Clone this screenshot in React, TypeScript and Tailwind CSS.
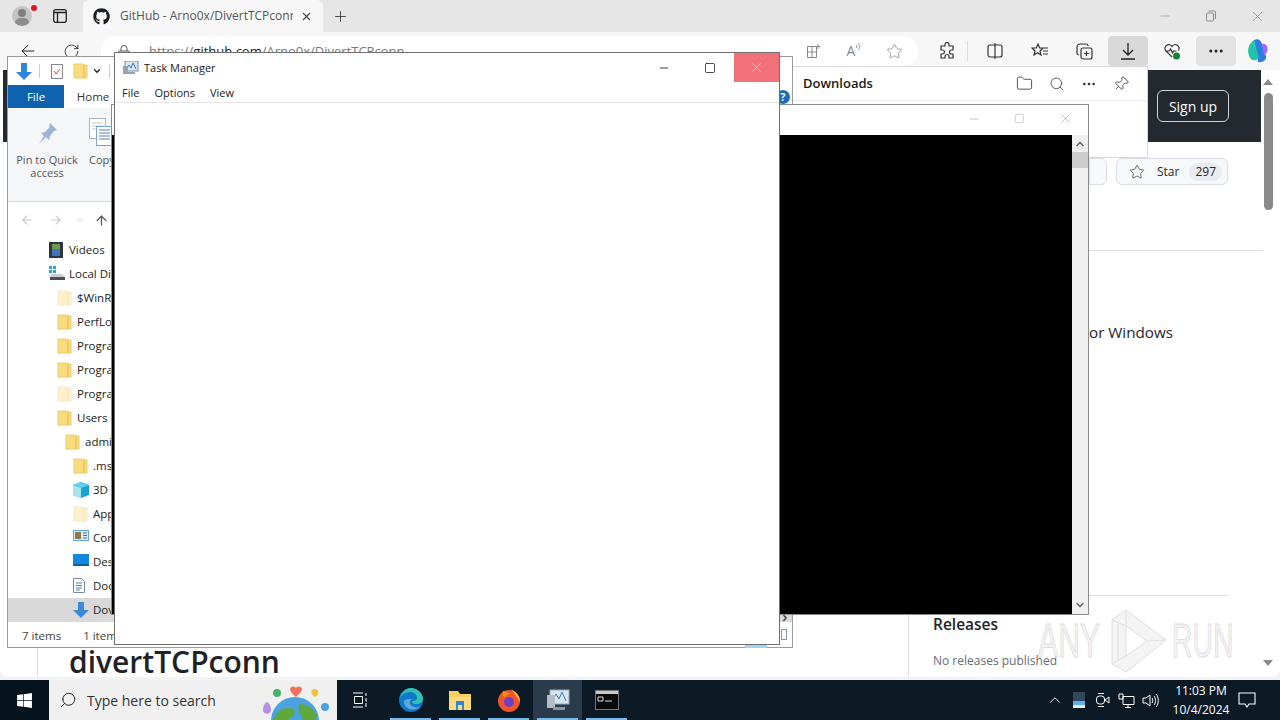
import {
  ArrowLeft,
  ArrowRight,
  ArrowUp,
  ChevronDown,
  ChevronRight,
  ChevronUp,
  Ellipsis,
  Folder,
  Minus,
  Pin,
  Plus,
  RotateCw,
  Search,
  Square,
  Star,
  X,
} from "lucide-react";
import { FaGithub, FaWindows } from "react-icons/fa";

const font = "font-['Open_Sans','Noto_Sans',sans-serif]";

const FolderIcon = ({ faded }: { faded?: boolean }) => (
  <svg width="15" height="16" viewBox="0 0 15 16" className={faded ? "opacity-40" : ""}>
    <path d="M1 1h9l1 1h3v13H1z" fill="#fbdc7c" stroke="#eccb6d" />
    <path d="M11 2v13" stroke="#e3b94f" />
  </svg>
);

const treeRows = [
  { label: "Videos", x: 69, icon: "video" },
  { label: "Local Di", x: 69, icon: "disk" },
  { label: "$WinR", x: 77, icon: "faded" },
  { label: "PerfLo", x: 77, icon: "folder" },
  { label: "Progra", x: 77, icon: "folder" },
  { label: "Progra", x: 77, icon: "folder" },
  { label: "Progra", x: 77, icon: "faded" },
  { label: "Users", x: 77, icon: "folder" },
  { label: "admi", x: 85, icon: "folder" },
  { label: ".ms", x: 93, icon: "folder" },
  { label: "3D (", x: 93, icon: "cube" },
  { label: "App", x: 93, icon: "faded" },
  { label: "Con", x: 93, icon: "contact" },
  { label: "Des", x: 93, icon: "desktop" },
  { label: "Doc", x: 93, icon: "doc" },
  { label: "Dov", x: 93, icon: "down" },
];

const TreeIcon = ({ kind }: { kind: string }) => {
  if (kind === "folder") return <FolderIcon />;
  if (kind === "faded") return <FolderIcon faded />;
  if (kind === "video")
    return (
      <svg width="14" height="16" viewBox="0 0 14 16">
        <rect width="14" height="16" fill="#2c3440" />
        <rect x="3" y="2" width="8" height="12" fill="#6f9a52" />
        <rect x="3" y="7" width="8" height="7" fill="#3f74b5" />
      </svg>
    );
  if (kind === "disk")
    return (
      <svg width="16" height="14" viewBox="0 0 16 14">
        <rect x="0" y="0" width="3" height="3" fill="#22a7d8" />
        <rect x="4" y="0" width="3" height="3" fill="#22a7d8" />
        <rect x="0" y="4" width="3" height="3" fill="#22a7d8" />
        <rect x="4" y="4" width="3" height="3" fill="#22a7d8" />
        <path d="M2 8h11l3 3H1z" fill="#c9ced2" />
        <rect x="1" y="11" width="15" height="3" fill="#4a4f55" />
      </svg>
    );
  if (kind === "cube")
    return (
      <svg width="16" height="16" viewBox="0 0 16 16">
        <path d="M8 0l8 3v10l-8 3-8-3V3z" fill="#19a3cf" />
        <path d="M0 3l8 3 8-3-8-3z" fill="#5fd0ea" />
        <path d="M0 3l8 3v10l-8-3z" fill="#a8e3f2" />
      </svg>
    );
  if (kind === "contact")
    return (
      <svg width="16" height="11" viewBox="0 0 16 11">
        <rect x=".5" y=".5" width="15" height="10" fill="#dcebf7" stroke="#6aa5d6" />
        <rect x="2" y="2" width="6" height="7" fill="#8a7b4f" />
        <path d="M10 3h4M10 5.500h4M10 8h4" stroke="#3f74b5" />
      </svg>
    );
  if (kind === "desktop")
    return (
      <svg width="16" height="12" viewBox="0 0 16 12">
        <rect width="16" height="12" fill="#1287e0" />
        <rect y="10" width="16" height="2" fill="#0b5fa5" />
      </svg>
    );
  if (kind === "doc")
    return (
      <svg width="12" height="15" viewBox="0 0 12 15">
        <path d="M.5.5h8l3 3v11H.5z" fill="#fff" stroke="#7a8a99" />
        <path d="M3 5h6M3 7.500h6M3 10h6M3 12h4" stroke="#3f8ac9" />
      </svg>
    );
  return (
    <svg width="16" height="16" viewBox="0 0 16 16">
      <path d="M5 0h6v8h5l-8 8-8-8h5z" fill="#3a8ad9" />
    </svg>
  );
};

const ToolbarGlyph = ({ children, className = "" }: { children: React.ReactNode; className?: string }) => (
  <div className={`flex h-[30px] w-[40px] items-center justify-center rounded-sm text-[#3a3a3a] ${className}`}>
    {children}
  </div>
);

const BrowserChrome = () => (
  <>
    <div className="flex h-[32px] items-end bg-[#e6e6e6] pl-[8px]">
      <div className="flex h-[32px] w-[75px] items-center gap-[21px] pl-[4px]">
        <div className="relative h-[20px] w-[20px] overflow-hidden rounded-full bg-[#c4c4c4]">
          <div className="absolute left-[6px] top-[3px] h-[8px] w-[8px] rounded-full bg-[#7f7f7f]" />
          <div className="absolute left-[3px] top-[12px] h-[10px] w-[14px] rounded-full bg-[#8c8c8c]" />
        </div>
        <svg width="14" height="14" viewBox="0 0 14 14" fill="none" stroke="#222" strokeWidth="1.3">
          <rect x=".7" y=".7" width="12.600" height="12.600" rx="2" />
          <path d="M1 3.500h12M4.500 3.500V13" />
        </svg>
      </div>
      <div className="flex h-[32px] w-[240px] items-center rounded-t-md bg-[#f7f7f7] pl-[10px] pr-[10px]">
        <FaGithub className="shrink-0 text-[17px] text-[#1b1f23]" />
        <span className={`ml-[10px] w-[173px] truncate whitespace-nowrap text-[12px] [text-overflow:clip] text-[#555] ${font}`}>
          GitHub - Arno0x/DivertTCPconn
        </span>
        <X size={13} className="ml-auto text-[#444]" />
      </div>
      <div className="flex h-[32px] w-[35px] items-center justify-center">
        <Plus size={17} strokeWidth={1.2} className="text-[#333]" />
      </div>
      <div className="ml-auto flex h-[32px] items-center pr-[14px] text-[#8c8c8c]">
        <Minus size={14} strokeWidth={1} />
        <svg width="12" height="12" viewBox="0 0 12 12" fill="none" stroke="#8c8c8c" className="ml-[33px]">
          <rect x="1.500" y="3" width="7" height="8" rx="1" />
          <path d="M3.500 1h6a1 1 0 0 1 1 1v7" />
        </svg>
        <X size={17} strokeWidth={1} className="ml-[32px]" />
      </div>
    </div>
    <div className="flex h-[38px] items-center bg-[#f7f7f7] pl-[8px]">
      <ArrowLeft size={20} strokeWidth={1.2} className="ml-[10px] text-[#222]" />
      <RotateCw size={17} strokeWidth={1.2} className="ml-[25px] text-[#222]" />
      <div className="ml-[21px] flex h-[30px] w-[817px] items-center rounded-full bg-white pl-[16px] pt-[2px]">
        <svg width="14" height="16" viewBox="0 0 14 16" fill="none" stroke="#555" className="mr-[18px]">
          <rect x="1.500" y="7" width="11" height="8" rx="1" />
          <path d="M4 7V4.500a3 3 0 0 1 6 0V7" />
        </svg>
        <span className={`text-[13px] text-[#777] ${font}`}>
          https://<span className="text-[#222]">github.com</span>/Arno0x/DivertTCPconn
        </span>
      </div>
    </div>
  </>
);

const ToolbarIcons = () => (
  <div className="absolute left-[794px] top-[36px] flex h-[30px] items-center">
    <div className="flex w-[120px] items-center justify-between pl-[12px] pr-[11px] text-[#8a8a8a]">
      <svg width="16" height="16" viewBox="0 0 16 16" fill="none" stroke="#8a8a8a">
        <path d="M1.500 3.500h9v11h-9zM1.500 9h9M6 3.500v11M12 1v5M9.500 3.500h5" />
      </svg>
      <div className="flex items-start">
        <span className={`text-[14px] leading-[18px] ${font}`}>A</span>
        <svg width="6" height="9" viewBox="0 0 6 9" fill="none" stroke="#8a8a8a">
          <path d="M1 3c1 1 1 2 0 3M3 1c2 2 2 5 0 7" />
        </svg>
      </div>
      <Star size={17} strokeWidth={1.1} />
    </div>
    <div className="flex items-center pl-[13px]">
      <ToolbarGlyph>
        <svg width="18" height="18" viewBox="0 0 18 18" fill="none" stroke="#333" strokeWidth="1.2">
          <path d="M7 2.500a2 2 0 0 1 4 0V4h4v4h-1.500a2 2 0 0 0 0 4H15v4h-4v-1.500a2 2 0 0 0-4 0V16H3v-4h1.500a2 2 0 0 0 0-4H3V4h4z" />
        </svg>
      </ToolbarGlyph>
      <div className="h-[20px] w-px bg-[#dcdcdc]" />
      <ToolbarGlyph className="ml-[7px]">
        <svg width="18" height="18" viewBox="0 0 18 18" fill="none" stroke="#333" strokeWidth="1.2">
          <rect x="2" y="3" width="14" height="12" rx="2" />
          <path d="M9 1v16" />
        </svg>
      </ToolbarGlyph>
      <ToolbarGlyph className="ml-[5px]">
        <svg width="18" height="18" viewBox="0 0 18 18" fill="none" stroke="#333" strokeWidth="1.2">
          <path d="M7 2l1.700 4H12L9 9l1 4-3.500-2.300L3 13l1-4-3-3h4.300zM12 6h5M12 9h5M12 12h5" />
        </svg>
      </ToolbarGlyph>
      <ToolbarGlyph className="ml-[4px]">
        <svg width="18" height="18" viewBox="0 0 18 18" fill="none" stroke="#333" strokeWidth="1.2">
          <rect x="6" y="6" width="11" height="11" rx="2" />
          <path d="M11.500 9v5M9 11.500h5M4 13a2 2 0 0 1-2-2V5a3 3 0 0 1 3-3h6a2 2 0 0 1 2 2" />
        </svg>
      </ToolbarGlyph>
      <ToolbarGlyph className="ml-[4px] bg-[#d9d9d9]">
        <svg width="18" height="20" viewBox="0 0 18 20" fill="none" stroke="#222" strokeWidth="1.3">
          <path d="M9 2v12M4 9l5 5 5-5M2 18h14" />
        </svg>
      </ToolbarGlyph>
      <ToolbarGlyph className="ml-[4px]">
        <svg width="20" height="20" viewBox="0 0 20 20" fill="none" stroke="#333" strokeWidth="1.2">
          <path d="M10 16L3.500 9.500a3.800 3.800 0 0 1 6.500-4 3.800 3.800 0 0 1 6.500 4M3 10h4l1.500-2 2 4 1-2h3" />
          <circle cx="14.500" cy="15" r="3.500" fill="#188038" stroke="none" />
        </svg>
      </ToolbarGlyph>
      <ToolbarGlyph className="ml-[4px] bg-[#e3e3e3]">
        <Ellipsis size={18} className="text-[#222]" />
      </ToolbarGlyph>
      <svg width="24" height="26" viewBox="0 0 24 26" className="ml-[10px]">
        <path d="M8 2c4-2 7 0 8 4l4 12c1 4-4 7-8 6z" fill="#2c7fe0" />
        <path d="M4 20C0 12 3 6 8 2l5 18c-3 3-7 3-9 0z" fill="#22c3a6" />
        <path d="M16 6c4-1 7 3 5 8l-3 4z" fill="#9a6bf0" />
      </svg>
    </div>
  </div>
);

const PageBody = () => (
  <div className="relative h-[607px] rounded-b-lg bg-white">
    <div className="absolute left-[3px] top-0 h-[72px] w-[1258px] bg-[#24292f]">
      <div className={`absolute left-[1154px] top-[20px] flex h-[32px] w-[72px] items-center justify-center rounded-md border border-[#d0d7de] text-[14px] text-white ${font}`}>
        Sign up
      </div>
    </div>
    <div className="absolute left-[37px] top-[570px] h-[37px] w-px bg-[#d8dee4]" />
    <h1 className={`absolute left-[69px] top-[572px] text-[30px] font-semibold leading-[40px] text-[#1f2328] ${font}`}>
      divertTCPconn
    </h1>
    <div className="absolute left-[1089px] top-[88px] h-[27px] w-[18px] rounded-r-md border border-[#d8dee4] bg-[#f6f8fa]" />
    <div className={`absolute left-[1116px] top-[88px] flex h-[27px] w-[112px] items-center rounded-md border border-[#d8dee4] bg-[#f6f8fa] pl-[12px] text-[12px] text-[#24292f] ${font}`}>
      <Star size={16} strokeWidth={1.4} className="text-[#57606a]" />
      <span className="ml-[12px]">Star</span>
      <span className="ml-[10px] rounded-full bg-[#e8ebef] px-[6px]">297</span>
    </div>
    <div className="absolute left-[1089px] top-[180px] h-px w-[174px] bg-[#d8dee4]" />
    <div className={`absolute left-[1089px] top-[250px] text-[15.200px] leading-[24px] text-[#1f2328] ${font}`}>or Windows</div>
    <div className="absolute left-[1085px] top-[525px] h-px w-[143px] bg-[#d8dee4]" />
    <div className="absolute left-[908px] top-[545px] h-[62px] w-px bg-[#d8dee4]" />
    <div className={`absolute left-[933px] top-[542px] text-[15.500px] font-semibold leading-[24px] text-[#1f2328] ${font}`}>Releases</div>
    <div className={`absolute left-[933px] top-[582px] text-[12px] leading-[18px] text-[#656d76] ${font}`}>No releases published</div>
    <div className="absolute left-[1258px] top-0 flex h-[600px] w-[20px] flex-col items-center pt-[9px]">
      <div className="h-0 w-0 border-x-[5px] border-b-[6px] border-x-transparent border-b-[#8a8a8a]" />
      <div className="mt-[8px] h-[117px] w-[9px] rounded-full bg-[#8a8a8a]" />
      <div className="mb-[4px] mt-auto h-0 w-0 border-x-[5px] border-t-[6px] border-x-transparent border-t-[#8a8a8a]" />
    </div>
  </div>
);

const DownloadsFlyout = () => (
  <div className="absolute left-[760px] top-[66px] h-[92px] w-[388px] border border-[#d8d8d8] bg-white">
    <div className="flex h-[34px] items-center border-b border-[#ececec] pl-[42px] pr-[18px]">
      <span className={`text-[13px] font-semibold text-[#1a1a1a] ${font}`}>Downloads</span>
      <Folder size={17} strokeWidth={1.2} className="ml-auto text-[#333]" />
      <Search size={16} strokeWidth={1.2} className="ml-[16px] text-[#333]" />
      <Ellipsis size={16} className="ml-[16px] text-[#333]" />
      <Pin size={16} strokeWidth={1.2} className="ml-[16px] rotate-45 text-[#333]" />
    </div>
  </div>
);

const ConsoleWindow = () => (
  <div className="absolute left-[111px] top-[104px] flex h-[511px] w-[978px] flex-col border border-[#8b8b8b] bg-white">
    <div className="flex h-[30px] items-center justify-end pb-[3px] pr-[15px] text-[#9a9a9a]">
      <Minus size={14} strokeWidth={1} />
      <Square size={11} strokeWidth={1} className="ml-[33px]" />
      <X size={15} strokeWidth={1} className="ml-[33px]" />
    </div>
    <div className="flex min-h-0 flex-1">
      <div className="flex-1 bg-black" />
      <div className="flex w-[16px] flex-col items-center bg-[#f0f0f0]">
        <ChevronUp size={12} strokeWidth={2.5} className="mt-[3px] text-[#555]" />
        <div className="mt-[2px] h-[16px] w-full bg-[#cdcdcd]" />
        <ChevronDown size={12} strokeWidth={2.500} className="mb-[3px] mt-auto text-[#555]" />
      </div>
    </div>
  </div>
);

const ExplorerWindow = () => (
  <div className={`absolute left-[7px] top-[56px] flex h-[592px] w-[786px] flex-col border border-[#9a9a9a] bg-white ${font}`}>
    <div className="flex h-[28px] items-center pl-[8px]">
      <svg width="16" height="17" viewBox="0 0 16 17">
        <path d="M5 0h6v9h5l-8 8-8-8h5z" fill="#2f86dc" />
      </svg>
      <div className="ml-[7px] h-[14px] w-px bg-[#ccc]" />
      <svg width="12" height="15" viewBox="0 0 12 15" className="ml-[11px]">
        <rect x=".5" y=".5" width="11" height="14" fill="#fff" stroke="#8a8a8a" />
        <path d="M3 7l2 3 4-5" stroke="#d1473a" fill="none" />
      </svg>
      <div className="ml-[10px]">
        <FolderIcon />
      </div>
      <ChevronDown size={10} strokeWidth={3} className="ml-[4px] text-[#222]" />
      <div className="ml-[7px] h-[14px] w-px bg-[#ccc]" />
    </div>
    <div className="flex h-[23px] text-[11.500px]">
      <div className="flex w-[56px] items-center justify-center bg-[#0f62ae] text-white">File</div>
      <div className="flex w-[58px] items-center justify-center text-[#333]">Home</div>
    </div>
    <div className="flex h-[94px] shrink-0 border-b border-[#d9d9d9] bg-[#f5f6f7] pl-[8px] pt-[14px]">
      <div className="flex w-[62px] flex-col items-center text-center text-[11px] leading-[13px] text-[#555]">
        <svg width="22" height="24" viewBox="0 0 22 24" className="mb-[7px]">
          <path d="M14 1l7 7-3 1-4 5-1 4-3-3-7 7 5-8-3-3 4-1 4-4z" fill="#9db4d3" />
        </svg>
        Pin to Quick
        <br />
        access
      </div>
      <div className="ml-[11px] flex flex-col text-[11px] leading-[13px] text-[#555]">
        <svg width="24" height="28" viewBox="0 0 24 28" className="-mt-[4px] mb-[7px]">
          <rect x=".5" y=".5" width="16" height="20" fill="#fff" stroke="#a7b3c2" />
          <path d="M3 5h11M3 8h11M3 11h11" stroke="#c3cad3" />
          <rect x="7.500" y="8.500" width="16" height="19" fill="#fff" stroke="#7fa3cf" />
          <path d="M10 12h11M10 15h11M10 18h11M10 21h11" stroke="#4f81bd" />
        </svg>
        Copy
      </div>
    </div>
    <div className="flex h-[36px] shrink-0 items-center pl-[12px] text-[#c8c8c8]">
      <ArrowLeft size={14} />
      <ArrowRight size={14} className="ml-[15px]" />
      <ChevronDown size={10} className="ml-[12px]" />
      <ArrowUp size={15} strokeWidth={2} className="ml-[9px] text-[#555]" />
    </div>
    <div className="flex min-h-0 flex-1 flex-col text-[11.500px] text-[#222]">
      {treeRows.map((row, i) => (
        <div
          key={i}
          className={`relative h-[24px] shrink-0 ${row.label === "Dov" ? "bg-[#d9d9d9]" : ""}`}
        >
          <div className="absolute top-[4px]" style={{ left: row.x - 28 }}>
            <TreeIcon kind={row.icon} />
          </div>
          <span className="absolute top-[3px] whitespace-nowrap" style={{ left: row.x - 8 }}>
            {row.label}
          </span>
        </div>
      ))}
    </div>
    <div className="flex h-[25px] shrink-0 items-center gap-[22px] pl-[14px] pt-[3px] text-[11.500px] text-[#444]">
      <span>7 items</span>
      <span>1 item</span>
    </div>
    <div className="absolute left-[768px] top-[33px] flex h-[14px] w-[14px] items-center justify-center rounded-full bg-[#1a6fb8] text-[10px] font-bold text-white">
      ?
    </div>
    <ChevronRight size={10} strokeWidth={3} className="absolute left-[772px] top-[556px] text-[#333]" />
    <div className="absolute left-[773px] top-[572px] h-[11px] w-[6px] border border-[#8a9bb0]" />
    <div className="absolute left-[737px] top-[588px] h-[3px] w-[22px] bg-[#9ed3f2]" />
  </div>
);

const TaskManagerWindow = () => (
  <div className={`absolute left-[114px] top-[52px] flex h-[593px] w-[666px] flex-col border border-[#707070] bg-white ${font}`}>
    <div className="flex h-[29px] items-center">
      <svg width="16" height="14" viewBox="0 0 16 14" className="ml-[8px]">
        <rect x="2" y="0" width="13" height="10" fill="#d7e6f2" stroke="#7c8b99" />
        <path d="M3 8l3-4 2 3 2-5 3 6" stroke="#3d7ab8" fill="none" />
        <rect x="0" y="5" width="5" height="8" fill="#9aa3ab" />
        <rect x="5" y="11" width="7" height="2" fill="#9aa3ab" />
      </svg>
      <span className="ml-[5px] pt-[1px] text-[11px] text-[#222]">Task Manager</span>
      <div className="ml-auto flex items-center">
        <Minus size={12} strokeWidth={1.6} className="mr-[34px] text-black" />
        <Square size={12} strokeWidth={1.4} className="mr-[18px] text-black" />
        <div className="flex h-[29px] w-[45px] items-center justify-center bg-[#f1707a]">
          <X size={15} strokeWidth={1} className="text-white" />
        </div>
      </div>
    </div>
    <div className="flex h-[21px] items-center gap-[15px] border-b border-[#e6e6e6] pl-[7px] pt-[2px] text-[11px] text-[#222]">
      <span>File</span>
      <span>Options</span>
      <span>View</span>
    </div>
    <div className="flex-1 bg-white" />
  </div>
);

const TaskbarSlot = ({
  children,
  selected,
}: {
  children: React.ReactNode;
  selected?: boolean;
}) => (
  <div className={`relative flex h-[40px] w-[49px] items-center justify-center ${selected ? "bg-[#2a3c4b]" : ""}`}>
    {children}
    <div className="absolute bottom-0 left-[4px] right-[4px] h-[2px] bg-[#76b9ed]" />
  </div>
);

const Taskbar = () => (
  <div className="flex h-[40px] items-center bg-[#0c1a25]">
    <div className="flex h-[40px] w-[49px] items-center justify-center bg-[#04131d]">
      <FaWindows className="text-[17px] text-white" />
    </div>
    <div className={`flex h-[40px] w-[288px] items-center bg-[#f0f0f0] pl-[10px] ${font}`}>
      <Search size={18} strokeWidth={1.3} className="-scale-x-100 text-[#222]" />
      <span className="ml-[10px] text-[14px] text-[#333]">Type here to search</span>
      <svg width="76" height="40" viewBox="0 0 76 40" className="ml-auto">
        <circle cx="34" cy="41" r="24" fill="#4aa3df" />
        <path d="M13 38c5-9 12-12 19-9 4 3 1 7-3 9-1 2-2 2-3 2H13z" fill="#5fa83a" />
        <path d="M38 24c7 0 14 4 18 11l-2 5H42c-2-6-6-10-4-16z" fill="#5fa83a" />
        <path d="M2 30c0-5 3-8 4-8s4 3 4 8-8 5-8 0z" fill="#b68fe0" />
        <circle cx="16" cy="13" r="4" fill="#48b26b" />
        <path d="M29 9c1-3 4-3 6-1 2-2 5-2 6 1 0 3-4 6-6 8-2-2-6-5-6-8z" fill="#f0705a" />
        <path d="M51 10c2-2 5-1 6 1 1 3-1 5-3 6-2-1-5-5-3-7z" fill="#f3bd3e" />
        <circle cx="64" cy="27" r="4" fill="#4aa3df" />
      </svg>
    </div>
    <div className="flex h-[40px] items-center">
      <div className="flex h-[40px] w-[49px] items-center justify-center pr-[3px]">
        <svg width="16" height="16" viewBox="0 0 16 16" fill="none" stroke="#fff">
          <path d="M1 1h10M2.500 4.500h8v7h-8zM1 15h10M14 1v3M14 6v3h1M14 11v4" />
        </svg>
      </div>
      <TaskbarSlot>
        <svg width="26" height="26" viewBox="0 0 26 26">
          <circle cx="13" cy="13" r="12" fill="#0f78c9" />
          <path d="M2 12C3 5 8 1 13 1c6 0 12 5 12 11 0 3-3 5-7 5-3 0-4-1-4-3 2 0 5 0 5-3 0-4-4-6-7-6-5 0-9 3-10 7z" fill="#35c1b1" />
          <path d="M6 15c0 5 6 9 12 7 2 0 3-1 4-2-4 1-8 0-10-3-1-2 0-4 2-5-4 0-8 0-8 3z" fill="#fff" opacity=".35" />
        </svg>
      </TaskbarSlot>
      <TaskbarSlot>
        <svg width="24" height="21" viewBox="0 0 24 21">
          <path d="M1 1h9l2 3h11v16H1z" fill="#f9cf5f" />
          <path d="M1 7h22v13H1z" fill="#fbdc7c" />
          <rect x="8" y="11" width="8" height="9" fill="#2f86dc" />
          <rect x="10" y="15" width="4" height="5" fill="#fbdc7c" />
        </svg>
      </TaskbarSlot>
      <TaskbarSlot>
        <svg width="24" height="24" viewBox="0 0 24 24">
          <circle cx="12" cy="13" r="11" fill="#f2542d" />
          <path d="M14 1c5 3 9 7 9 13-3-5-5-8-9-13z" fill="#ffbd2f" />
          <circle cx="12" cy="14" r="5" fill="#6c3fc5" />
          <path d="M6 3c-1 3 0 5 2 6 2-3 4-3 6-3-3-1-5-2-8-3z" fill="#ff980e" />
        </svg>
      </TaskbarSlot>
      <TaskbarSlot selected>
        <svg width="24" height="22" viewBox="0 0 24 22">
          <rect x="4" y="1" width="19" height="14" fill="#d6e5f0" stroke="#9aa8b5" />
          <path d="M6 12l4-7 3 5 3-7 4 9" stroke="#3d7ab8" fill="none" />
          <rect x="1" y="6" width="8" height="13" fill="#b5bcc2" />
          <rect x="7" y="18" width="12" height="3" fill="#8f979e" />
        </svg>
      </TaskbarSlot>
      <TaskbarSlot>
        <svg width="24" height="20" viewBox="0 0 24 20">
          <rect x=".5" y=".5" width="23" height="19" fill="#0a0a0a" stroke="#777" />
          <rect x="1" y="1" width="22" height="3" fill="#c8c8c8" />
          <path d="M3 7h5v4H3zM10 11h7" stroke="#ddd" fill="none" />
        </svg>
      </TaskbarSlot>
    </div>
    <div className={`ml-auto flex h-[40px] items-center text-white ${font}`}>
      <ChevronUp size={18} strokeWidth={1.2} />
      <svg width="12" height="16" viewBox="0 0 12 16" className="ml-[9px]">
        <rect width="12" height="9" fill="#33475c" />
        <rect y="9" width="12" height="4" fill="#5db0ea" />
        <rect y="13" width="12" height="3" fill="#e8e8e8" />
      </svg>
      <svg width="16" height="16" viewBox="0 0 16 16" fill="none" stroke="#fff" className="ml-[10px]">
        <rect x="1.500" y="4" width="8" height="8" rx="3" />
        <path d="M10 8l4-3v6zM3 1.500h6M3 14.500h6" />
      </svg>
      <svg width="17" height="15" viewBox="0 0 17 15" fill="none" stroke="#fff" className="ml-[7px]">
        <path d="M5 3.500h11v8H5zM10 11.500v3M7 14.500h6M1 1h4v5H1z" />
      </svg>
      <svg width="17" height="15" viewBox="0 0 17 15" fill="none" stroke="#fff" className="ml-[7px]">
        <path d="M1 5h3l4-3v11l-4-3H1zM10 5c1 1 1 4 0 5M12 3c2 2 2 7 0 9M14 1c3 3 3 10 0 13" />
      </svg>
      <div className="ml-[11px] flex w-[62px] flex-col items-center text-[12px] leading-[19px]">
        <span>11:03 PM</span>
        <span>10/4/2024</span>
      </div>
      <div className="flex w-[48px] justify-start pl-[6px]">
        <svg width="18" height="17" viewBox="0 0 18 17" fill="none" stroke="#fff" strokeWidth="1.100">
          <path d="M1 1h16v11h-6l-2 3-2-3H1z" />
        </svg>
      </div>
    </div>
  </div>
);

const Watermark = () => (
  <div className="pointer-events-none absolute left-[1038px] top-[608px] flex h-[66px] items-center font-['Liberation_Sans',sans-serif] text-[48px] leading-[48px] text-[#f3f3f3] [-webkit-text-stroke:1px_#dedede]">
    <div className="w-[64px] origin-left scale-x-[0.63] whitespace-nowrap">ANY</div>
    <svg width="62" height="66" viewBox="0 0 62 66" fill="#f4f4f4" stroke="#dedede" className="ml-[4px]">
      <path d="M6 12L20 2l40 30-40 32-14-8z" />
      <path d="M20 18v30l21-15z" fill="#fff" />
      <path d="M6 12l14 6M6 56l14-8M20 2v16M41 33l19-1M12 16v36" fill="none" />
    </svg>
    <div className="ml-[4px] w-[62px] origin-left scale-x-[0.59] whitespace-nowrap">RUN</div>
  </div>
);

export default function App() {
  return (
    <div className="relative h-[720px] w-[1280px] overflow-hidden bg-[#f1f3f5]">
      <div className="h-[680px] bg-[#f1f3f5]">
        <BrowserChrome />
        <PageBody />
      </div>
      <Taskbar />
      <ToolbarIcons />
      <div className="absolute left-[31px] top-[5px] h-[6px] w-[6px] rounded-full bg-[#e81123]" />
      <DownloadsFlyout />
      <ExplorerWindow />
      <ConsoleWindow />
      <TaskManagerWindow />
      <Watermark />
    </div>
  );
}
